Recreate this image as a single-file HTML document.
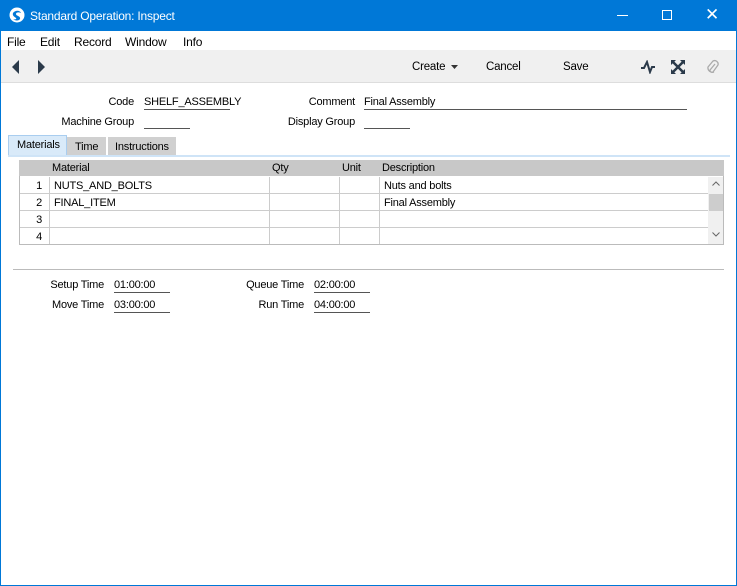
<!DOCTYPE html><html><head><style>
*{margin:0;padding:0;box-sizing:border-box}
body{width:737px;height:586px;background:#fff;font-family:"Liberation Sans",sans-serif;font-size:11px;letter-spacing:-0.2px;color:#000;position:relative;overflow:hidden}
.a{position:absolute;white-space:nowrap}
.r{text-align:right}
.u{border-bottom:1px solid #555}
</style></head><body>
<div class="a" style="left:0;top:0;width:737px;height:586px;border:1px solid #0078d7"></div>
<div class="a" style="left:0;top:0;width:737px;height:31px;background:#0078d7;color:#fff">
<svg class="a" style="left:9px;top:7px" width="16" height="16" viewBox="0 0 16 16"><circle cx="8" cy="8" r="7.5" fill="#fff"/><path d="M4 6c2-3 7-3 8 0-2-1-5-1-5 1 0 2 5 2 4 5-1 2-5 2-7 0 2 1 4 0 3-1-1-1-4-2-3-5z" fill="#0078d7"/></svg>
<div class="a" style="left:30px;top:9px;font-size:12px">Standard Operation: Inspect</div>
<div class="a" style="left:617px;top:15px;width:11px;height:1px;background:#fff"></div>
<div class="a" style="left:662px;top:10px;width:10px;height:10px;border:1px solid #fff"></div>
<div class="a" style="left:705px;top:5px;font-size:17px">✕</div>
</div>
<div class="a" style="left:7px;top:35px;font-size:12px">File</div>
<div class="a" style="left:40px;top:35px;font-size:12px">Edit</div>
<div class="a" style="left:74px;top:35px;font-size:12px">Record</div>
<div class="a" style="left:125px;top:35px;font-size:12px">Window</div>
<div class="a" style="left:183px;top:35px;font-size:12px">Info</div>
<div class="a" style="left:1px;top:50px;width:735px;height:33px;background:#f0f0f0;border-bottom:1px solid #ddd"></div>
<svg class="a" style="left:10px;top:60px" width="40" height="14"><path d="M9 0v14L2 7z" fill="#2b3a4a"/><path d="M28 0v14l7-7z" fill="#2b3a4a"/></svg>
<div class="a" style="left:412px;top:61px;font-size:11.5px">Create</div>
<svg class="a" style="left:451px;top:65px" width="7" height="4"><path d="M0 0h7L3.5 4z" fill="#333"/></svg>
<div class="a" style="left:486px;top:61px;font-size:11.5px">Cancel</div>
<div class="a" style="left:563px;top:61px;font-size:11.5px">Save</div>
<svg class="a" style="left:640px;top:60px" width="16" height="14"><path d="M1 8h3l3-6 3 10 2-5h3" stroke="#2b3a4a" stroke-width="2" fill="none"/></svg>
<svg class="a" style="left:671px;top:60px" width="14" height="14"><path d="M1 1l12 12M13 1L1 13" stroke="#2b3a4a" stroke-width="2.5"/><path d="M0 0h5L0 5zM14 0v5L9 0zM0 14v-5l5 5zM14 14h-5l5-5z" fill="#2b3a4a"/></svg>
<svg class="a" style="left:705px;top:59px" width="14" height="16"><path d="M10 5l-5 6a2 2 0 0 0 3 2l5-7a3.5 3.5 0 0 0-5-4L3 8a4.5 4.5 0 0 0 6 5" stroke="#aaa" stroke-width="1.3" fill="none"/></svg>
<div class="a r" style="left:60px;width:74px;top:96px">Code</div>
<div class="a u" style="left:144px;top:95px;width:86px;height:15px;padding-top:1px">SHELF_ASSEMBLY</div>
<div class="a r" style="left:260px;width:95px;top:96px">Comment</div>
<div class="a u" style="left:364px;top:95px;width:323px;height:15px;padding-top:1px">Final Assembly</div>
<div class="a r" style="left:40px;width:94px;top:116px">Machine Group</div>
<div class="a u" style="left:144px;top:115px;width:46px;height:14px"></div>
<div class="a r" style="left:260px;width:95px;top:116px">Display Group</div>
<div class="a u" style="left:364px;top:115px;width:46px;height:14px"></div>
<div class="a" style="left:8px;top:135px;width:59px;height:21px;background:#d9eaf9;border:1px solid #a9cdef;padding:3px 0 0 8px">Materials</div>
<div class="a" style="left:67px;top:137px;width:40px;height:18px;background:#d0d0d0;border-right:1px solid #fff;padding:4px 0 0 8px">Time</div>
<div class="a" style="left:108px;top:137px;width:68px;height:18px;background:#d0d0d0;padding:4px 0 0 7px">Instructions</div>
<div class="a" style="left:8px;top:155px;width:722px;height:2px;background:#cfe4f7"></div>
<div class="a" style="left:19px;top:160px;width:705px;height:85px;border:1px solid #bbb;background:#fff"></div>
<div class="a" style="left:19px;top:160px;width:705px;height:16px;background:#c8c8c8"></div>
<div class="a" style="left:52px;top:162px">Material</div>
<div class="a" style="left:272px;top:162px">Qty</div>
<div class="a" style="left:342px;top:162px">Unit</div>
<div class="a" style="left:382px;top:162px">Description</div>
<div class="a" style="left:20px;top:193px;width:689px;height:1px;background:#ccc"></div>
<div class="a" style="left:20px;top:210px;width:689px;height:1px;background:#ccc"></div>
<div class="a" style="left:20px;top:227px;width:689px;height:1px;background:#ccc"></div>
<div class="a" style="left:49px;top:177px;width:1px;height:67px;background:#ccc"></div>
<div class="a" style="left:269px;top:177px;width:1px;height:67px;background:#ccc"></div>
<div class="a" style="left:339px;top:177px;width:1px;height:67px;background:#ccc"></div>
<div class="a" style="left:379px;top:177px;width:1px;height:67px;background:#ccc"></div>
<div class="a" style="left:708px;top:177px;width:15px;height:67px;background:#f0f0f0"></div>
<div class="a" style="left:709px;top:194px;width:14px;height:17px;background:#cdcdcd"></div>
<svg class="a" style="left:712px;top:181px" width="8" height="5"><path d="M0.5 4.5L4 1l3.5 3.5" stroke="#666" fill="none"/></svg>
<svg class="a" style="left:712px;top:232px" width="8" height="5"><path d="M0.5 0.5L4 4l3.5-3.5" stroke="#666" fill="none"/></svg>
<div class="a r" style="left:20px;width:22px;top:180px">1</div>
<div class="a r" style="left:20px;width:22px;top:197px">2</div>
<div class="a r" style="left:20px;width:22px;top:214px">3</div>
<div class="a r" style="left:20px;width:22px;top:231px">4</div>
<div class="a" style="left:54px;top:180px">NUTS_AND_BOLTS</div>
<div class="a" style="left:54px;top:197px">FINAL_ITEM</div>
<div class="a" style="left:384px;top:180px">Nuts and bolts</div>
<div class="a" style="left:384px;top:197px">Final Assembly</div>
<div class="a" style="left:13px;top:269px;width:711px;height:1px;background:#bbb"></div>
<div class="a r" style="left:20px;width:84px;top:279px">Setup Time</div>
<div class="a u" style="left:114px;top:278px;width:56px;height:15px;padding-top:1px">01:00:00</div>
<div class="a r" style="left:220px;width:84px;top:279px">Queue Time</div>
<div class="a u" style="left:314px;top:278px;width:56px;height:15px;padding-top:1px">02:00:00</div>
<div class="a r" style="left:20px;width:84px;top:299px">Move Time</div>
<div class="a u" style="left:114px;top:298px;width:56px;height:15px;padding-top:1px">03:00:00</div>
<div class="a r" style="left:220px;width:84px;top:299px">Run Time</div>
<div class="a u" style="left:314px;top:298px;width:56px;height:15px;padding-top:1px">04:00:00</div>
</body></html>
